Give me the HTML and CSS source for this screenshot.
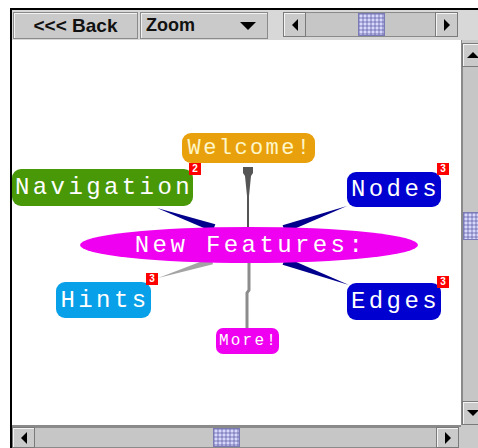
FILE: index.html
```html
<!DOCTYPE html>
<html lang="en">
<head>
    <meta charset="UTF-8">
    <title>TouchGraph</title>
    <link rel="stylesheet" href="styles.css">
</head>
<body>
    <div class="applet">
        <!-- horni lista -->
        <div class="toolbar">
            <button class="btn back">&lt;&lt;&lt; Back</button>
            <div class="combo">
                <span class="combo-text">Zoom</span>
                <span class="combo-arrow"></span>
            </div>
            <div class="sb sb-h tb-scroll">
                <span class="sb-btn"><i class="arr arr-l"></i></span>
                <span class="sb-track"><span class="thumb"></span></span>
                <span class="sb-btn"><i class="arr arr-r"></i></span>
            </div>
        </div>

        <!-- plocha grafu -->
        <div class="canvas">
            <svg class="edges" width="449" height="385" viewBox="12 40 449 385">
                <polygon fill="#555" points="243,167 253,167 253,173 251,176 249,196 249,230 247,230 247,196 245,176 243,173"/>
                <polygon fill="#00008c" points="157,208 215.3,224.2 212.7,231.8"/>
                <polygon fill="#00008c" points="347,206 285.4,232.8 282.6,225.2"/>
                <polygon fill="#a4a4a4" points="158,278 213,264.3 211,257.7"/>
                <polygon fill="#00008c" points="349,285 282.6,264.8 285.4,257.2"/>
                <polyline fill="none" stroke="#8c8c8c" stroke-width="3" points="249,262 249,290 247,293 247,329"/>
            </svg>

            <div class="node welcome">Welcome!</div>
            <div class="node navigation">Navigation</div>
            <div class="node nodes">Nodes</div>
            <div class="node hints">Hints</div>
            <div class="node edges-node">Edges</div>
            <div class="node features">New Features:</div>
            <div class="node more">More!</div>

            <span class="badge b-welcome">2</span>
            <span class="badge b-nodes">3</span>
            <span class="badge b-hints">3</span>
            <span class="badge b-edges">3</span>
        </div>

        <!-- svisly posuvnik -->
        <div class="sb sb-v">
            <span class="sb-btn"><i class="arr arr-u"></i></span>
            <span class="sb-track"><span class="thumb"></span></span>
            <span class="sb-btn"><i class="arr arr-d"></i></span>
        </div>

        <!-- vodorovny posuvnik -->
        <div class="sb sb-h bottom">
            <span class="sb-btn"><i class="arr arr-l"></i></span>
            <span class="sb-track"><span class="thumb"></span></span>
            <span class="sb-btn"><i class="arr arr-r"></i></span>
        </div>
        <div class="corner"></div>
    </div>
</body>
</html>
```
FILE: styles.css
```css
/* Reset */
* {
    margin: 0;
    padding: 0;
    box-sizing: border-box;
}

html, body {
    overflow: hidden;
    background-color: #fff;
}

body {
    font-family: "Liberation Sans", Arial, sans-serif;
}

/* Cely applet */
.applet {
    margin: 8px 0 0 10px;
    width: 474px;
    border-top: 2px solid #000;
    border-left: 2px solid #000;
    display: grid;
    grid-template-columns: 449px 23px;
    grid-template-rows: 30px 385px 23px;
}

/* Horni lista */
.toolbar {
    grid-column: 1 / -1;
    display: flex;
    align-items: flex-start;
    gap: 2px;
    padding: 2px 0 0 1px;
    background-color: #d8d8d8;
}

.btn,
.combo {
    height: 27px;
    background-color: #cacaca;
    border: 1px solid #8a8a8a;
    box-shadow: inset 1px 1px #f2f2f2;
    font-family: "Liberation Sans", Arial, sans-serif;
    font-weight: bold;
    font-size: 18px;
    color: #111;
}

.back {
    width: 125px;
    font-size: 19px;
}

.combo {
    width: 128px;
    display: flex;
    align-items: center;
    justify-content: space-between;
    padding: 0 11px 0 5px;
}

.combo-arrow {
    width: 0;
    height: 0;
    border-left: 8px solid transparent;
    border-right: 8px solid transparent;
    border-top: 8px solid #000;
}

.tb-scroll {
    margin-left: 13px;
    width: 175px;
    height: 25px;
}

/* Posuvniky */
.sb {
    display: flex;
    background-color: #cacaca;
}

.sb-v {
    flex-direction: column;
    padding-top: 3px;
    border-left: 1px solid #8a8a8a;
}

.sb-h.bottom {
    border-top: 2px solid #8a8a8a;
    padding-right: 2px;
}

.sb-btn {
    flex: 0 0 23px;
    display: flex;
    align-items: center;
    justify-content: center;
    background-color: #cacaca;
    border: 1px solid #7a7a7a;
    box-shadow: inset 1px 1px #f4f4f4;
}

.sb-v .sb-btn {
    flex-basis: 24px;
}

.sb-track {
    flex: 1;
    display: flex;
    background-color: #c6c6c6;
    border-top: 1px solid #8a8a8a;
    border-bottom: 1px solid #8a8a8a;
}

.sb-v .sb-track {
    flex-direction: column;
    border: none;
    border-left: 1px solid #8a8a8a;
}

.thumb {
    background-color: #aaaadc;
    background-image:
        radial-gradient(circle, #d8d8fa 0.8px, transparent 1.1px),
        radial-gradient(circle, #8c8cc4 0.7px, transparent 1px);
    background-size: 4px 4px;
    background-position: 0 0, 2px 2px;
    border: 1px solid #7a7ab4;
}

.tb-scroll .thumb {
    width: 27px;
    margin-left: 52px;
}

.bottom .thumb {
    width: 27px;
    margin-left: 178px;
}

.sb-v .thumb {
    height: 28px;
    margin-top: 145px;
}

.arr {
    width: 0;
    height: 0;
}

.arr-l {
    border-top: 6px solid transparent;
    border-bottom: 6px solid transparent;
    border-right: 6px solid #000;
}

.arr-r {
    border-top: 6px solid transparent;
    border-bottom: 6px solid transparent;
    border-left: 6px solid #000;
}

.arr-u {
    border-left: 6px solid transparent;
    border-right: 6px solid transparent;
    border-bottom: 6px solid #000;
}

.arr-d {
    border-left: 6px solid transparent;
    border-right: 6px solid transparent;
    border-top: 6px solid #000;
}

.corner {
    background-color: #cacaca;
}

/* Plocha grafu */
.canvas {
    position: relative;
    overflow: hidden;
    background-color: #fff;
}

.edges {
    position: absolute;
    left: 0;
    top: 0;
}

.node {
    position: absolute;
    display: flex;
    align-items: center;
    justify-content: center;
    font-family: "Liberation Mono", "DejaVu Sans Mono", monospace;
    font-size: 24px;
    letter-spacing: 3.4px;
    padding-left: 3px;
    color: #fff;
    border-radius: 9px;
    white-space: nowrap;
}

.welcome {
    left: 170px;
    top: 93px;
    width: 133px;
    height: 30px;
    font-size: 22px;
    letter-spacing: 2.4px;
    background-color: #e8a00c;
    color: #fff6c8;
}

.navigation {
    left: 0;
    top: 129px;
    width: 181px;
    height: 37px;
    background-color: #489808;
}

.nodes {
    left: 335px;
    top: 132px;
    width: 94px;
    height: 35px;
    background-color: #0000d0;
}

.hints {
    left: 44px;
    top: 242px;
    width: 95px;
    height: 36px;
    background-color: #08a0e8;
}

.edges-node {
    left: 335px;
    top: 243px;
    width: 94px;
    height: 37px;
    background-color: #0000d0;
}

.features {
    left: 68px;
    top: 187px;
    width: 338px;
    height: 36px;
    border-radius: 50%;
    background-color: #f000f0;
}

.more {
    left: 204px;
    top: 288px;
    width: 63px;
    height: 26px;
    font-size: 16px;
    letter-spacing: 2.2px;
    padding-left: 2px;
    border-radius: 7px;
    background-color: #f000f0;
}

/* Cervene odznaky */
.badge {
    position: absolute;
    width: 12px;
    height: 12px;
    background-color: #f00;
    color: #fff;
    font-family: "Liberation Sans", Arial, sans-serif;
    font-weight: bold;
    font-size: 10px;
    line-height: 12px;
    text-align: center;
}

.b-welcome { left: 177px; top: 123px; }
.b-nodes { left: 425px; top: 123px; }
.b-hints { left: 134px; top: 233px; }
.b-edges { left: 425px; top: 236px; }
```
